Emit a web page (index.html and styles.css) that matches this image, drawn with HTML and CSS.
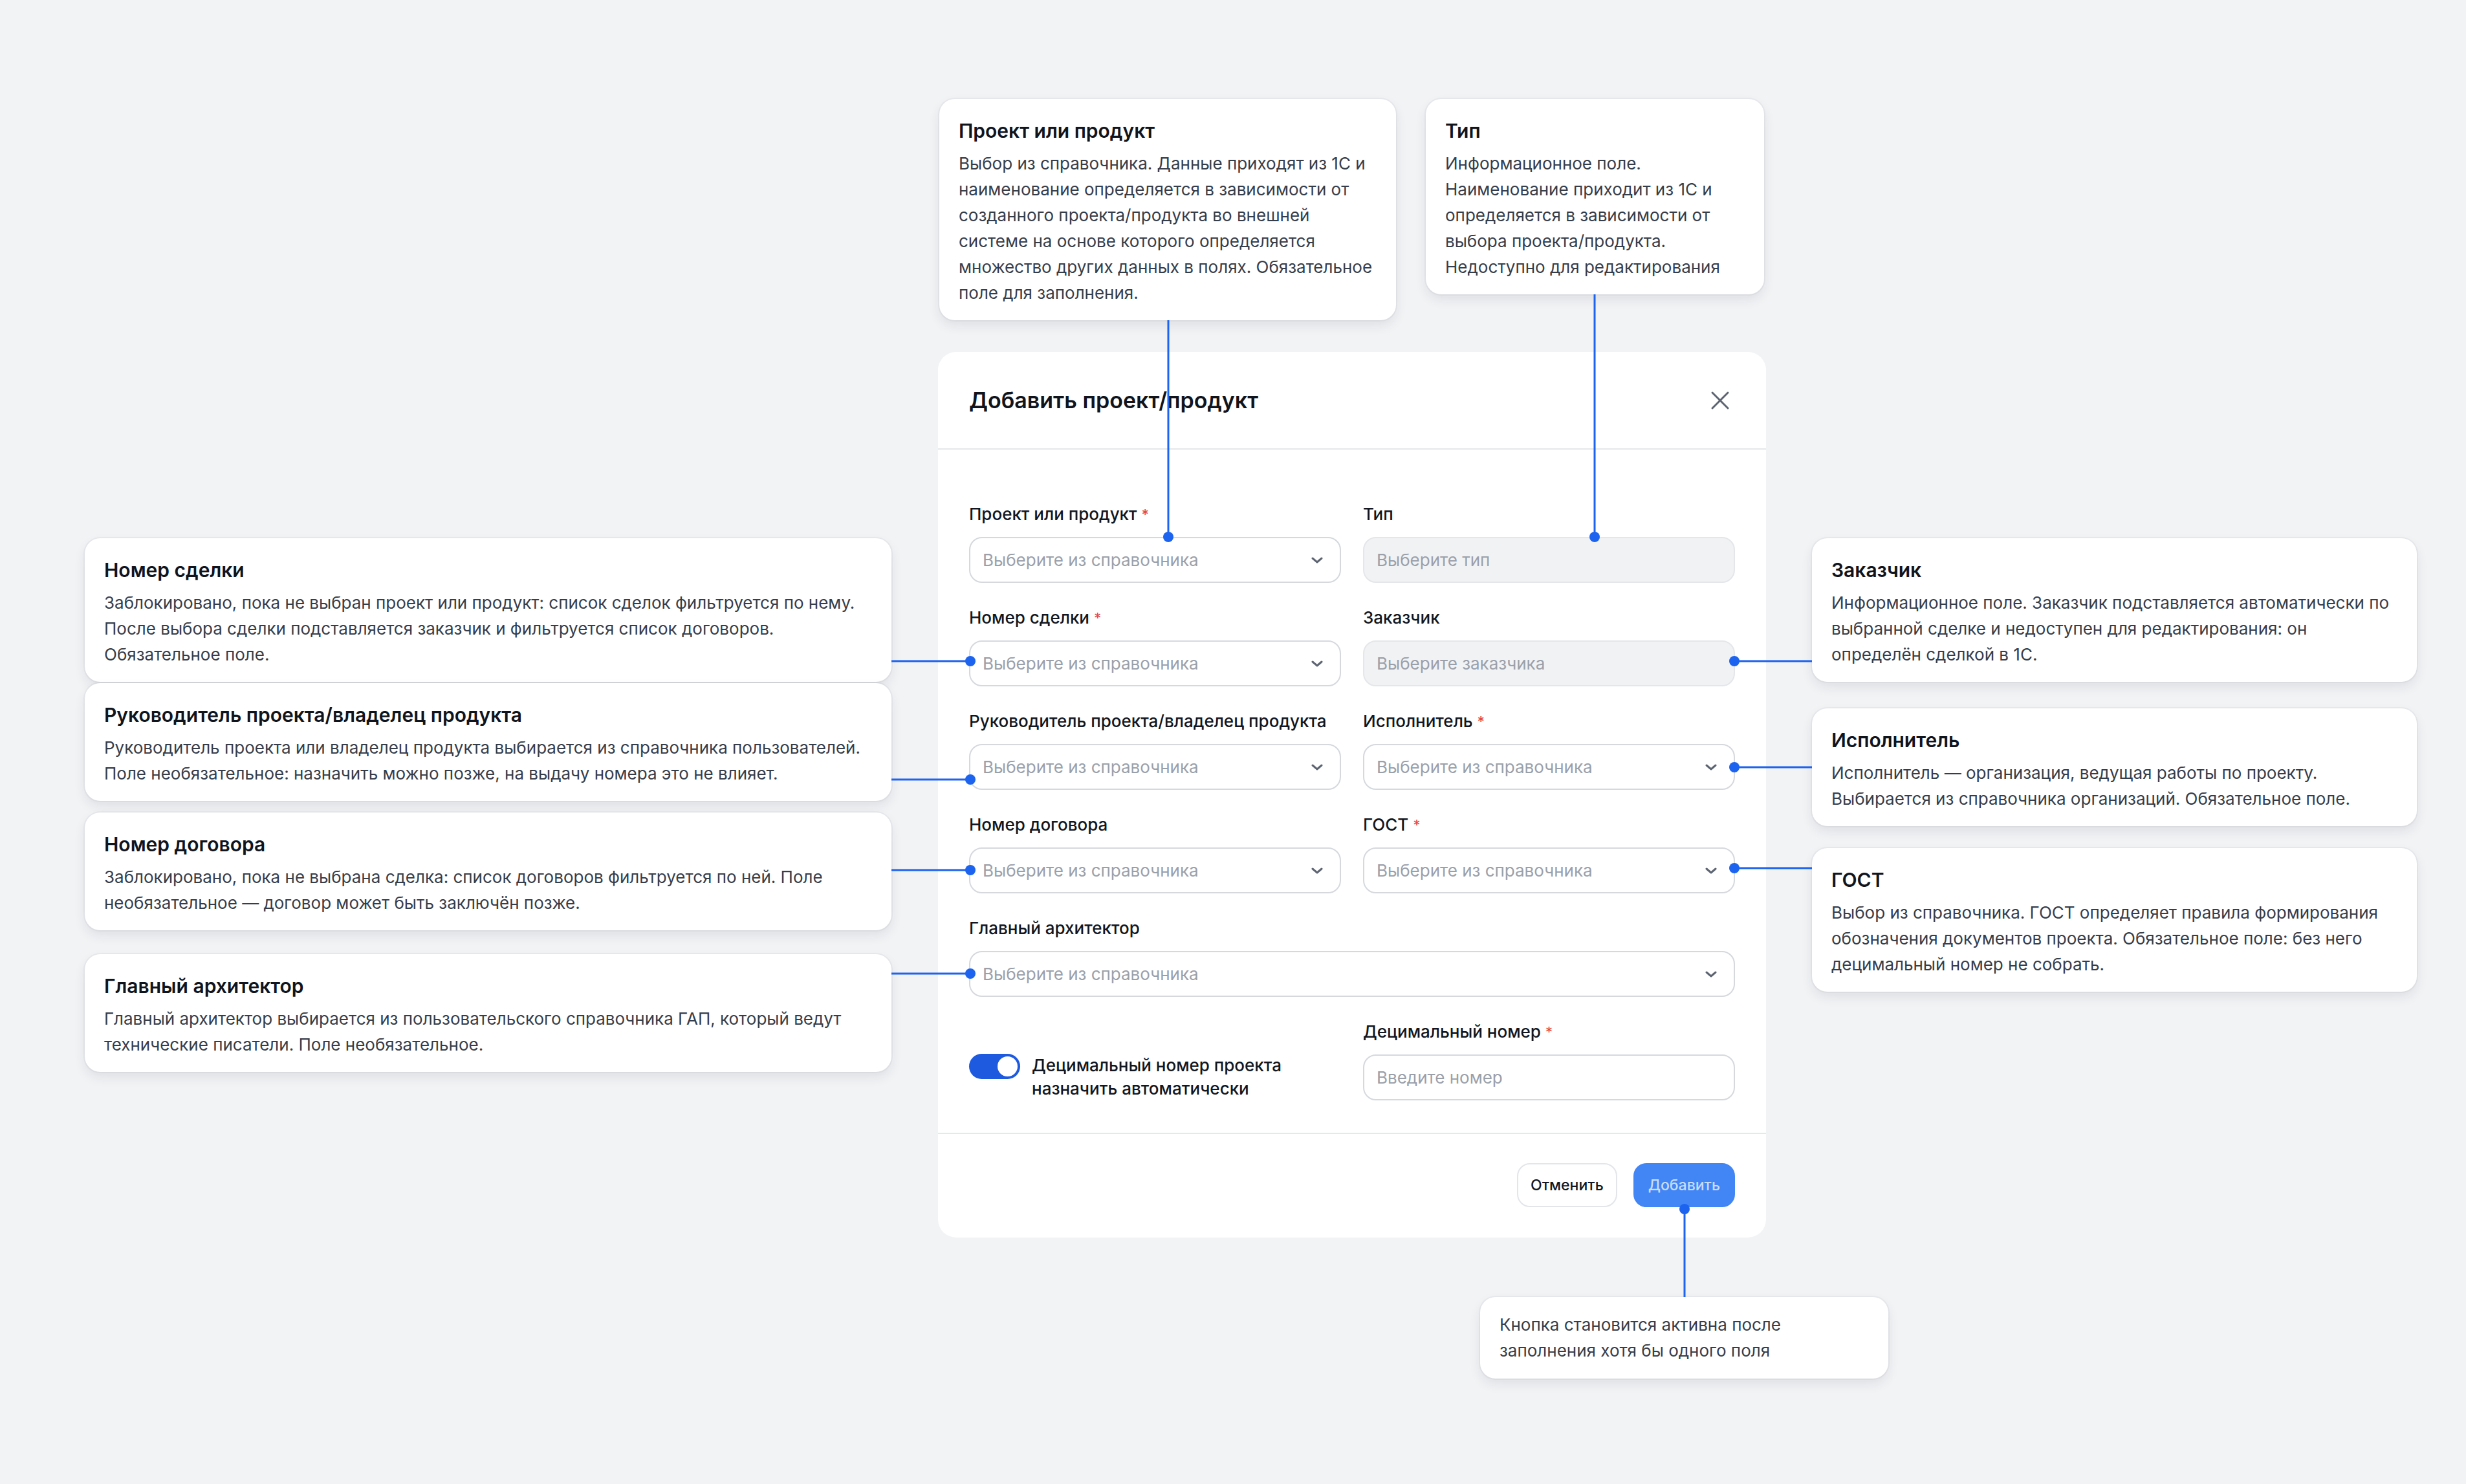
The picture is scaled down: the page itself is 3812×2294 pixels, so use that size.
FILE: index.html
```html
<!DOCTYPE html>
<html lang="ru">
<head>
  <meta charset="UTF-8" />
  <meta name="viewport" content="width=device-width, initial-scale=1.0"/>
  <title>Добавить проект/продукт — схема полей</title>
  <link rel="stylesheet" href="styles.css">
</head>
<body>
  <div class="canvas">

    <!-- Notes above the dialog -->
    <div class="note note-project">
      <h3>Проект или продукт</h3>
      <p>Выбор из справочника. Данные приходят из 1С и<br>наименование определяется в зависимости от<br>созданного проекта/продукта во внешней<br>системе на основе которого определяется<br>множество других данных в полях. Обязательное<br>поле для заполнения.</p>
    </div>
    <div class="note note-type">
      <h3>Тип</h3>
      <p>Информационное поле.<br>Наименование приходит из 1С и<br>определяется в зависимости от<br>выбора проекта/продукта.<br>Недоступно для редактирования</p>
    </div>

    <!-- Notes on the left -->
    <div class="note note-deal">
      <h3>Номер сделки</h3>
      <p>Заблокировано, пока не выбран проект или продукт: список сделок фильтруется по нему.<br>После выбора сделки подставляется заказчик и фильтруется список договоров.<br>Обязательное поле.</p>
    </div>
    <div class="note note-manager">
      <h3>Руководитель проекта/владелец продукта</h3>
      <p>Руководитель проекта или владелец продукта выбирается из справочника пользователей.<br>Поле необязательное: назначить можно позже, на выдачу номера это не влияет.</p>
    </div>
    <div class="note note-contract">
      <h3>Номер договора</h3>
      <p>Заблокировано, пока не выбрана сделка: список договоров фильтруется по ней. Поле<br>необязательное — договор может быть заключён позже.</p>
    </div>
    <div class="note note-architect">
      <h3>Главный архитектор</h3>
      <p>Главный архитектор выбирается из пользовательского справочника ГАП, который ведут<br>технические писатели. Поле необязательное.</p>
    </div>

    <!-- Notes on the right -->
    <div class="note note-customer">
      <h3>Заказчик</h3>
      <p>Информационное поле. Заказчик подставляется автоматически по<br>выбранной сделке и недоступен для редактирования: он<br>определён сделкой в 1С.</p>
    </div>
    <div class="note note-contractor">
      <h3>Исполнитель</h3>
      <p>Исполнитель — организация, ведущая работы по проекту.<br>Выбирается из справочника организаций. Обязательное поле.</p>
    </div>
    <div class="note note-gost">
      <h3>ГОСТ</h3>
      <p>Выбор из справочника. ГОСТ определяет правила формирования<br>обозначения документов проекта. Обязательное поле: без него<br>децимальный номер не собрать.</p>
    </div>

    <!-- Note under the dialog -->
    <div class="note note-plain note-submit">
      <p>Кнопка становится активна после<br>заполнения хотя бы одного поля</p>
    </div>

    <!-- The dialog itself -->
    <div class="modal">
      <div class="modal-header">
        <h2>Добавить проект/продукт</h2>
        <button class="close-btn" aria-label="Закрыть">
          <svg width="30" height="30" viewBox="0 0 30 30"><path d="M3 3L27 27M27 3L3 27" stroke="currentColor" stroke-width="3" stroke-linecap="round"/></svg>
        </button>
      </div>

      <div class="modal-body">
        <div class="form-item">
          <div class="label">Проект или продукт <span class="req">*</span></div>
          <div class="field">
            <span class="placeholder">Выберите из справочника</span>
            <svg class="chevron" width="18" height="10" viewBox="0 0 18 10"><path d="M2 2L9 8L16 2" fill="none" stroke="currentColor" stroke-width="3" stroke-linecap="round" stroke-linejoin="round"/></svg>
          </div>
        </div>
        <div class="form-item">
          <div class="label">Тип</div>
          <div class="field disabled"><span class="placeholder">Выберите тип</span></div>
        </div>

        <div class="form-item">
          <div class="label">Номер сделки <span class="req">*</span></div>
          <div class="field">
            <span class="placeholder">Выберите из справочника</span>
            <svg class="chevron" width="18" height="10" viewBox="0 0 18 10"><path d="M2 2L9 8L16 2" fill="none" stroke="currentColor" stroke-width="3" stroke-linecap="round" stroke-linejoin="round"/></svg>
          </div>
        </div>
        <div class="form-item">
          <div class="label">Заказчик</div>
          <div class="field disabled"><span class="placeholder">Выберите заказчика</span></div>
        </div>

        <div class="form-item">
          <div class="label">Руководитель проекта/владелец продукта</div>
          <div class="field">
            <span class="placeholder">Выберите из справочника</span>
            <svg class="chevron" width="18" height="10" viewBox="0 0 18 10"><path d="M2 2L9 8L16 2" fill="none" stroke="currentColor" stroke-width="3" stroke-linecap="round" stroke-linejoin="round"/></svg>
          </div>
        </div>
        <div class="form-item">
          <div class="label">Исполнитель <span class="req">*</span></div>
          <div class="field">
            <span class="placeholder">Выберите из справочника</span>
            <svg class="chevron" width="18" height="10" viewBox="0 0 18 10"><path d="M2 2L9 8L16 2" fill="none" stroke="currentColor" stroke-width="3" stroke-linecap="round" stroke-linejoin="round"/></svg>
          </div>
        </div>

        <div class="form-item">
          <div class="label">Номер договора</div>
          <div class="field">
            <span class="placeholder">Выберите из справочника</span>
            <svg class="chevron" width="18" height="10" viewBox="0 0 18 10"><path d="M2 2L9 8L16 2" fill="none" stroke="currentColor" stroke-width="3" stroke-linecap="round" stroke-linejoin="round"/></svg>
          </div>
        </div>
        <div class="form-item">
          <div class="label">ГОСТ <span class="req">*</span></div>
          <div class="field">
            <span class="placeholder">Выберите из справочника</span>
            <svg class="chevron" width="18" height="10" viewBox="0 0 18 10"><path d="M2 2L9 8L16 2" fill="none" stroke="currentColor" stroke-width="3" stroke-linecap="round" stroke-linejoin="round"/></svg>
          </div>
        </div>

        <div class="form-item wide">
          <div class="label">Главный архитектор</div>
          <div class="field">
            <span class="placeholder">Выберите из справочника</span>
            <svg class="chevron" width="18" height="10" viewBox="0 0 18 10"><path d="M2 2L9 8L16 2" fill="none" stroke="currentColor" stroke-width="3" stroke-linecap="round" stroke-linejoin="round"/></svg>
          </div>
        </div>

        <div class="toggle-row">
          <div class="switch on"><span class="knob"></span></div>
          <div class="toggle-text">Децимальный номер проекта<br>назначить автоматически</div>
        </div>
        <div class="form-item">
          <div class="label">Децимальный номер <span class="req">*</span></div>
          <div class="field"><span class="placeholder">Введите номер</span></div>
        </div>
      </div>

      <div class="modal-footer">
        <button class="btn btn-cancel">Отменить</button>
        <button class="btn btn-primary">Добавить</button>
      </div>
    </div>

    <!-- Connectors between notes and fields -->
    <svg class="links" width="3812" height="2294" viewBox="0 0 3812 2294">
      <g stroke="#1c63f0" stroke-width="3" fill="none">
        <path d="M1806 495V830"/>
        <path d="M2465 455V830"/>
        <path d="M1378 1022H1500"/>
        <path d="M1378 1205H1500"/>
        <path d="M1378 1345H1500"/>
        <path d="M1378 1505H1500"/>
        <path d="M2681 1022H2801"/>
        <path d="M2681 1186H2801"/>
        <path d="M2681 1342H2801"/>
        <path d="M2604 1869V2005"/>
      </g>
      <g fill="#1c63f0">
        <circle cx="1806" cy="830" r="8"/>
        <circle cx="2465" cy="830" r="8"/>
        <circle cx="1500" cy="1022" r="8"/>
        <circle cx="1500" cy="1205" r="8"/>
        <circle cx="1500" cy="1345" r="8"/>
        <circle cx="1500" cy="1505" r="8"/>
        <circle cx="2681" cy="1022" r="8"/>
        <circle cx="2681" cy="1186" r="8"/>
        <circle cx="2681" cy="1342" r="8"/>
        <circle cx="2604" cy="1869" r="8"/>
      </g>
    </svg>
  </div>
</body>
</html>
```

FILE: styles.css
```css
body {
  margin: 0;
  background: #f2f3f5;
  font-family: Inter, "Noto Sans", sans-serif;
  color: #111621;
}

.canvas {
  position: relative;
  width: 3812px;
  height: 2294px;
  overflow: hidden;
}

/* callout cards around the dialog */
.note {
  position: absolute;
  box-sizing: border-box;
  background: #fff;
  border-radius: 24px;
  padding: 29px 30px 22px;
  box-shadow: 0 0 0 2px rgba(20, 30, 50, 0.04), 0 8px 18px rgba(20, 30, 50, 0.09);
}

.note h3 {
  margin: 0;
  font-size: 30px;
  line-height: 40px;
  font-weight: 600;
  color: #10141d;
}

.note p {
  margin: 11px 0 0;
  font-size: 26px;
  line-height: 40px;
  color: #363d4a;
  white-space: nowrap;
}

.note-plain {
  padding: 23px 30px;
}

.note-plain p {
  margin: 0;
}

.note-project { left: 1452px; top: 153px; width: 706px; }
.note-type { left: 2204px; top: 153px; width: 523px; }

.note-deal { left: 131px; top: 832px; width: 1247px; }
.note-manager { left: 131px; top: 1056px; width: 1247px; }
.note-contract { left: 131px; top: 1256px; width: 1247px; }
.note-architect { left: 131px; top: 1475px; width: 1247px; }

.note-customer { left: 2801px; top: 832px; width: 935px; }
.note-contractor { left: 2801px; top: 1095px; width: 935px; }
.note-gost { left: 2801px; top: 1311px; width: 935px; }

.note-submit { left: 2288px; top: 2005px; width: 631px; }

/* dialog */
.modal {
  position: absolute;
  left: 1450px;
  top: 544px;
  width: 1280px;
  background: #fff;
  border-radius: 28px;
}

.modal-header {
  height: 149px;
  display: flex;
  align-items: center;
  justify-content: space-between;
  padding: 0 48px;
  border-bottom: 2px solid #e6e7ea;
}

.modal-header h2 {
  margin: 0;
  font-size: 34px;
  font-weight: 600;
  color: #10141d;
}

.close-btn {
  border: none;
  background: none;
  padding: 0;
  margin-right: 8px;
  color: #5d6471;
  display: flex;
}

.modal-body {
  display: grid;
  grid-template-columns: 1fr 1fr;
  column-gap: 34px;
  row-gap: 36px;
  padding: 82px 48px 50px;
  border-bottom: 2px solid #e6e7ea;
}

.form-item.wide {
  grid-column: 1 / 3;
}

.label {
  font-size: 26px;
  line-height: 36px;
  font-weight: 500;
  color: #111621;
  margin-bottom: 17px;
  white-space: nowrap;
}

.req {
  color: #e5484d;
  font-size: 22px;
  vertical-align: top;
}

.field {
  box-sizing: border-box;
  height: 71px;
  display: flex;
  align-items: center;
  justify-content: space-between;
  padding: 0 26px 0 19px;
  border: 2px solid #d5d8dd;
  border-radius: 20px;
  background: #fff;
}

.field.disabled {
  background: #f1f2f4;
  border-color: #e4e6e9;
}

.placeholder {
  font-size: 26px;
  color: #9aa0aa;
}

.chevron {
  color: #5d6471;
}

.toggle-row {
  align-self: end;
  display: flex;
  align-items: flex-start;
  gap: 18px;
}

.switch {
  position: relative;
  flex: none;
  width: 79px;
  height: 39px;
  border-radius: 20px;
  background: #1d5ae0;
}

.knob {
  position: absolute;
  right: 4px;
  top: 4px;
  width: 31px;
  height: 31px;
  border-radius: 50%;
  background: #fff;
}

.toggle-text {
  font-size: 26px;
  line-height: 36px;
  font-weight: 500;
  color: #111621;
}

.modal-footer {
  display: flex;
  justify-content: flex-end;
  gap: 25px;
  padding: 45px 48px 47px;
}

.btn {
  height: 68px;
  padding: 0 19px;
  border-radius: 20px;
  font-family: inherit;
  font-size: 23px;
  font-weight: 500;
}

.btn-cancel {
  background: #fff;
  border: 2px solid #e3e5e8;
  color: #111621;
}

.btn-primary {
  background: #4285f4;
  border: 2px solid #4285f4;
  color: rgba(255, 255, 255, 0.72);
  padding: 0 21px;
}

/* connector lines drawn over everything */
.links {
  position: absolute;
  left: 0;
  top: 0;
  pointer-events: none;
}
```
